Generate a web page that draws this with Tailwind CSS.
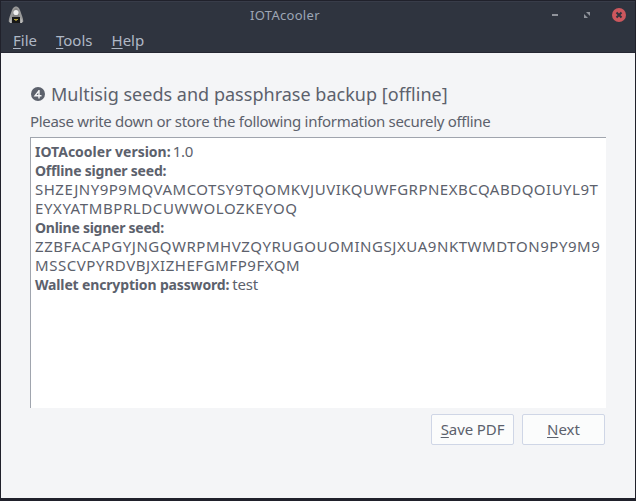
<!DOCTYPE html>
<html lang="en">
<head>
<meta charset="utf-8">
<title>IOTAcooler</title>
<script src="https://cdn.jsdelivr.net/npm/@tailwindcss/browser@4"></script>
</head>
<body class="h-[501px] w-[636px] overflow-hidden bg-[#20212b] font-['Noto_Sans',sans-serif] text-[15px] leading-[19px] text-[#5c616c]">
<div class="flex h-[501px] flex-col border-x border-b-[3px] border-t border-[#20212b]">
  <header class="h-[52px] shrink-0 border-t border-b border-t-[#383c49] border-b-[#252733] bg-[#2f343f] text-[#afb8c6]">
    <div class="flex h-[26px] items-center pr-[8px] pl-[7px]">
      <svg class="h-[18px] w-[16px] shrink-0" viewBox="0 0 16 18">
        <path d="M8 0.500C5.500 0.500 4.300 3 3.500 5.500C2.500 9 0.700 12 0.700 15.500L2.500 17H13.500L15.300 15.500C15.300 12 13.500 9 12.500 5.500C11.700 3 10.500 0.500 8 0.500Z" fill="#999"/>
        <path d="M8 2C6.500 2.500 5.500 4 5.200 7L4.500 11H11.500L10.800 7C10.500 4 9.500 2.500 8 2Z" fill="#858585"/>
        <path d="M1.500 15L3.500 11.500V17H2ZM14.500 15L12.500 11.500V17H14Z" fill="#b8b8b8"/>
        <circle cx="8" cy="6.500" r="2.600" fill="#efefef"/>
        <rect x="4" y="11" width="8" height="6" fill="#171717"/>
        <path d="M6 13.500H10M7 14.200H9" stroke="#b5a33c" stroke-width="1"/>
      </svg>
      <h1 class="ml-[226px] text-[13px] leading-[18px] tracking-[0.3px] text-[#9da6b5]">IOTAcooler</h1>
      <svg class="ml-auto h-[16px] w-[78px]" viewBox="0 0 78 16">
        <rect x="3" y="7" width="6" height="2" fill="#90939b"/>
        <path d="M37 5H41V9ZM35 7V11H39Z" fill="#90939b"/>
        <circle cx="70" cy="8" r="7" fill="#cc575d"/>
        <path d="M67.500 5.500L72.500 10.500M72.500 5.500L67.500 10.500" stroke="#2f343f" stroke-width="2"/>
      </svg>
    </div>
    <nav class="flex gap-[19px] pt-[3px] pl-[12px]">
      <span><span class="underline decoration-1 underline-offset-[2px]">F</span>ile</span>
      <span><span class="underline decoration-1 underline-offset-[2px]">T</span>ools</span>
      <span><span class="underline decoration-1 underline-offset-[2px]">H</span>elp</span>
    </nav>
  </header>
  <main class="flex grow flex-col bg-[#f4f5f7] pt-[28px] pr-[29px] pl-[29px]">
    <h2 class="flex h-[26px] items-center text-[18px] tracking-[0.02px]">
      <svg class="mr-[6px] h-[15px] w-[15px]" viewBox="0 0 15 15">
        <circle cx="8" cy="7" r="7" fill="#5c616c"/>
        <path d="M9 3V11.500M9.200 3.300L5 8.800H11.500" fill="none" stroke="#f4f5f7" stroke-width="1.400"/>
      </svg>
      <span>Multisig seeds and passphrase backup [offline]</span>
    </h2>
    <p class="mt-[5px] h-[25px] tracking-[-0.3px]">Please write down or store the following information securely offline</p>
    <div class="h-[271px] w-[576px] border-t border-l border-[#a0a5ae] bg-white pt-[4px] pl-[4px] whitespace-nowrap">
      <p><b class="text-[14px]">IOTAcooler version:</b><span class="ml-[2px] tracking-[-0.3px]">1.0</span></p>
      <p><b class="text-[14px] tracking-[-0.2px]">Offline signer seed:</b></p>
      <p class="tracking-[0.5px]">SHZEJNY9P9MQVAMCOTSY9TQOMKVJUVIKQUWFGRPNEXBCQABDQOIUYL9T</p>
      <p class="tracking-[0.6px]">EYXYATMBPRLDCUWWOLOZKEYOQ</p>
      <p><b class="text-[14px] tracking-[-0.25px]">Online signer seed:</b></p>
      <p class="tracking-[0.55px]">ZZBFACAPGYJNGQWRPMHVZQYRUGOUOMINGSJXUA9NKTWMDTON9PY9M9</p>
      <p class="tracking-[0.55px]">MSSCVPYRDVBJXIZHEFGMFP9FXQM</p>
      <p><b class="text-[14px] tracking-[-0.15px]">Wallet encryption password:</b><span class="ml-[3px] tracking-[-0.2px]">test</span></p>
    </div>
    <div class="mt-[6px] mr-px flex justify-end gap-[8px]">
      <button class="h-[31px] w-[83px] rounded-[2px] border border-[#cfd6e6] bg-[#fbfcfc] tracking-[-0.1px]"><span class="underline decoration-1 underline-offset-[2px]">S</span>ave PDF</button>
      <button class="h-[31px] w-[83px] rounded-[2px] border border-[#cfd6e6] bg-[#fbfcfc]"><span class="underline decoration-1 underline-offset-[2px]">N</span>ext</button>
    </div>
  </main>
</div>
</body>
</html>
